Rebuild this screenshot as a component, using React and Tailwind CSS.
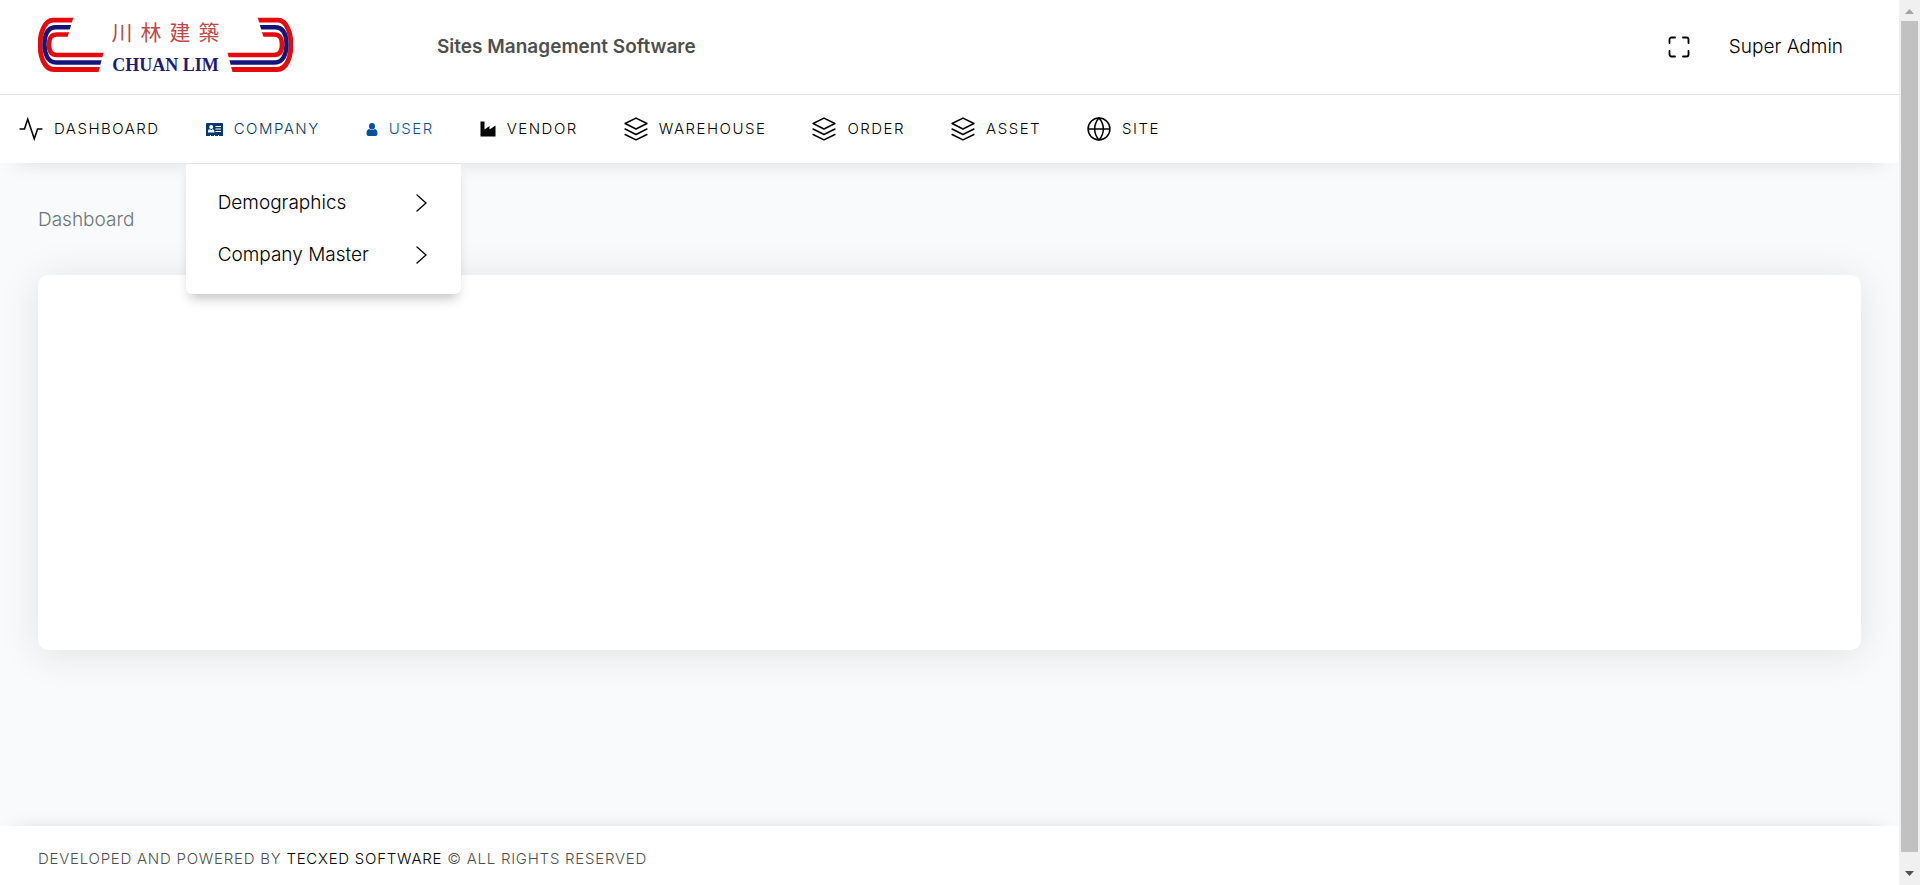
const stroke = {
  viewBox: "1 1 22 22",
  fill: "none",
  stroke: "currentColor",
  strokeWidth: 1.4,
  "aria-hidden": true,
};

const ActivityIcon = () => (
  <svg {...stroke} className="size-6">
    <polyline points="22 12 18 12 15 21 9 3 6 12 2 12" strokeLinecap="round" />
  </svg>
);

const LayersIcon = () => (
  <svg {...stroke} strokeLinecap="round" strokeLinejoin="round" className="size-6">
    <polygon points="12 2 22 7 12 12 2 7" />
    <polyline points="2 12 12 17 22 12" />
    <polyline points="2 17 12 22 22 17" />
  </svg>
);

const GlobeIcon = () => (
  <svg {...stroke} className="size-6">
    <circle cx="12" cy="12" r="10" />
    <path d="M2 12h20M12 2a15.3 15.3 0 0 1 4 10 15.3 15.3 0 0 1-4 10 15.3 15.3 0 0 1-4-10 15.3 15.3 0 0 1 4-10z" />
  </svg>
);

const ScanIcon = () => (
  <svg {...stroke} viewBox="0 0 24 24" strokeWidth="1.8" strokeLinecap="round" className="size-6">
    <path d="M8 2.5H4.5a2 2 0 0 0-2 2V8M16 2.5h3.5a2 2 0 0 1 2 2V8M21.5 16v3.5a2 2 0 0 1-2 2H16M8 21.5H4.5a2 2 0 0 1-2-2V16" />
  </svg>
);

const CardIcon = () => (
  <svg viewBox="0 0 17 13" className="h-[13px] w-[17px]" aria-hidden="true">
    <path
      fill="currentColor"
      d="M1 0h15a1 1 0 0 1 1 1v12h-4v-1h-1v1H9v-1H8v1H5v-1H4v1H0V1a1 1 0 0 1 1-1z"
    />
    <circle cx="5.2" cy="4" r="2" fill="#fff" />
    <path d="M2 9.5V8q0-1.800 1.800-1.800L5.200 7l1.400-.8Q8.400 6.200 8.400 8v1.500z" fill="#fff" />
    <path d="M9.500 3.500H15M9.500 6H15M9.500 8.500H15" stroke="#fff" />
  </svg>
);

const PersonIcon = () => (
  <svg viewBox="0 0 12 13" className="h-[13px] w-3" fill="currentColor" aria-hidden="true">
    <ellipse cx="6" cy="3.200" rx="3" ry="3.200" />
    <path d="M3 6q3 2.200 6 0 2.500.5 2.500 4.500 0 2.500-2 2.500h-7q-2 0-2-2.500Q.5 6.500 3 6z" />
  </svg>
);

const FactoryIcon = () => (
  <svg viewBox="0 0 16 16" className="size-4" fill="currentColor" aria-hidden="true">
    <path d="M.5.500h4V8.500L9.500 5V8.500L15.500 4.500v11H.5z" />
  </svg>
);

const ArrowIcon = () => (
  <svg viewBox="0 0 11 18" className="h-[18px] w-[11px]" fill="none" stroke="currentColor" strokeWidth="1.300" strokeLinecap="round" aria-hidden="true">
    <polyline points="1 1 10 9 1 17" />
  </svg>
);

const items = [
  { label: "Dashboard", Icon: ActivityIcon, color: "text-black" },
  { label: "Company", Icon: CardIcon, color: "text-[#04396f]", open: true },
  { label: "User", Icon: PersonIcon, color: "text-[#04519f]" },
  { label: "Vendor", Icon: FactoryIcon, color: "text-black" },
  { label: "Warehouse", Icon: LayersIcon, color: "text-black" },
  { label: "Order", Icon: LayersIcon, color: "text-black" },
  { label: "Asset", Icon: LayersIcon, color: "text-black" },
  { label: "Site", Icon: GlobeIcon, color: "text-black" },
];

function Wing({ flip, id }) {
  return (
    <svg viewBox="0 14 66 62" className="h-[62px] w-[66px]" aria-hidden="true">
      <clipPath id={id}>
        <path d="M0 14H36.400L29 39V50H66.200L59.500 76H0z" />
      </clipPath>
      <g transform={flip ? "translate(66 0) scale(-1 1)" : undefined}>
        <g clipPath={`url(#${id})`} fill="none">
          <path d="M40 20.200H15C6 20.200 2 34 2 45S6 69.500 16 69.500H68" stroke="#e60a0a" strokeWidth="4.800" />
          <path d="M40 27.200H18C9 27.200 6.500 36 6.500 45S10 62.500 18 62.500H68" stroke="#14147c" strokeWidth="4.400" />
          <path d="M40 34.500H19C12 34.500 11 39 11 45S13 55 19 55H68" stroke="#e60a0a" strokeWidth="4.600" />
        </g>
      </g>
    </svg>
  );
}

function Logo() {
  return (
    <a href="#home" aria-label="Chuan Lim" className="flex w-[255px] items-center justify-between pb-1">
      <Wing id="wing-left" />
      <span className="flex flex-col items-center gap-2 pt-1">
        <span className="flex gap-2 font-['Noto_Sans_CJK_TC',sans-serif] text-[21px] leading-7 font-normal text-[#c04848]">
          <span>川</span>
          <span>林</span>
          <span>建</span>
          <span>築</span>
        </span>
        <span className="font-['Liberation_Serif',serif] text-lg leading-6 font-bold whitespace-nowrap text-[#1c1c78]">
          CHUAN LIM
        </span>
      </span>
      <Wing id="wing-right" flip />
    </a>
  );
}

function CompanyMenu() {
  return (
    <ul className="absolute top-full left-[-20px] z-10 flex w-[275px] flex-col rounded-b-md border-t border-[#e0e0e0] bg-white py-[13px] shadow-[0_8px_12px_-4px_rgba(0,0,0,0.25)]">
      {["Demographics", "Company Master"].map((name) => (
        <li key={name}>
          <a href="#company" className="flex h-[52px] items-center justify-between pr-[34px] pl-8 text-[19px] text-black">
            {name}
            <ArrowIcon />
          </a>
        </li>
      ))}
    </ul>
  );
}

export default function App() {
  return (
    <div className="flex h-screen overflow-hidden bg-[#f9fafc] font-['Inter',sans-serif] font-light">
      <div className="flex min-w-0 flex-1 flex-col">
        <header className="relative z-10 bg-white shadow-[0_14px_20px_-16px_rgba(0,0,0,0.15)]">
          <div className="flex h-[95px] items-center border-b border-[#e5e5e5] pr-14 pl-[38px]">
            <Logo />
            <h1 className="ml-36 text-[19px] font-semibold text-[#4f4f4f]">Sites Management Software</h1>
            <button type="button" aria-label="Full screen" className="ml-auto text-black">
              <ScanIcon />
            </button>
            <a href="#account" className="ml-[38px] text-[19px] text-black">
              Super Admin
            </a>
          </div>
          <nav className="flex h-[68px] items-center gap-[46px] pl-[19px]">
            {items.map(({ label, Icon, color, open }) => (
              <div key={label} className="relative flex h-full items-center">
                <a
                  href={`#${label.toLowerCase()}`}
                  className={`flex items-center gap-[11px] text-[15px] tracking-widest uppercase ${color}`}
                >
                  <Icon />
                  {label}
                </a>
                {open && <CompanyMenu />}
              </div>
            ))}
          </nav>
        </header>
        <main className="flex flex-1 flex-col px-[38px] pt-[43px]">
          <p className="text-[19px] leading-7 text-[#6c757d]">Dashboard</p>
          <section className="mt-[41px] h-[375px] rounded-[10px] bg-white shadow-[0_4px_40px_rgba(0,0,0,0.1)]" />
        </main>
        <footer className="bg-white px-[38px] pt-[23px] pb-4 text-[15px] leading-5 shadow-[0_-12px_20px_-16px_rgba(0,0,0,0.15)]">
          <p className="tracking-wider text-[#4f4f4f] uppercase">
            Developed and Powered by{" "}
            <a href="#tecxed" className="text-black">
              Tecxed Software
            </a>{" "}
            © All rights reserved
          </p>
        </footer>
      </div>
      <div className="flex w-[21px] flex-col items-center bg-[#f0f0f0]" aria-hidden="true">
        <svg viewBox="0 0 21 21" className="size-[21px]">
          <path d="M6 14L10.500 9L15 14z" fill="#a3a3a3" />
        </svg>
        <div className="w-[17px] flex-1 bg-[#c1c1c1]" />
        <svg viewBox="0 0 21 33" className="h-[33px] w-[21px]">
          <path d="M6 19L10.500 24L15 19z" fill="#505050" />
        </svg>
      </div>
    </div>
  );
}
